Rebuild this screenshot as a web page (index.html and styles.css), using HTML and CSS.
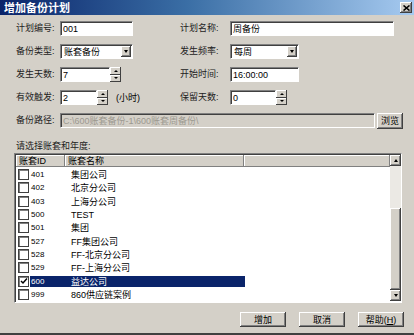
FILE: index.html
```html
<!DOCTYPE html>
<html lang="zh-CN">
<head>
  <meta charset="UTF-8" />
  <title>增加备份计划</title>
  <link rel="stylesheet" href="styles.css">
</head>
<body>
  <div class="dialog">
    <div class="titlebar">
      <span class="title">增加备份计划</span>
      <span class="close">
        <svg width="7" height="6" viewBox="0 0 7 6"><path d="M0.5 0.5 L6.5 5.5 M6.5 0.5 L0.5 5.5" stroke="#000" stroke-width="1.6" fill="none"/></svg>
      </span>
    </div>

    <div class="body">
      <div class="fields">
        <!-- row 1 -->
        <label>计划编号:</label>
        <div><input class="input w73" type="text" value="001"></div>
        <label>计划名称:</label>
        <div><input class="input w164" type="text" value="周备份"></div>

        <!-- row 2 -->
        <label>备份类型:</label>
        <div class="select w73"><span>账套备份</span><span class="drop"><i class="tri-down"></i></span></div>
        <label>发生频率:</label>
        <div class="select w69"><span>每周</span><span class="drop"><i class="tri-down"></i></span></div>

        <!-- row 3 -->
        <label>发生天数:</label>
        <div class="spin">
          <input class="input w50" type="text" value="7">
          <span class="spin-btns"><span class="spin-btn"><i class="tri-up"></i></span><span class="spin-btn"><i class="tri-down"></i></span></span>
        </div>
        <label>开始时间:</label>
        <div><input class="input w69" type="text" value="16:00:00"></div>

        <!-- row 4 -->
        <label>有效触发:</label>
        <div class="spin">
          <input class="input w37" type="text" value="2">
          <span class="spin-btns"><span class="spin-btn"><i class="tri-up"></i></span><span class="spin-btn"><i class="tri-down"></i></span></span>
          <span class="unit">(小时)</span>
        </div>
        <label>保留天数:</label>
        <div class="spin">
          <input class="input w46" type="text" value="0">
          <span class="spin-btns"><span class="spin-btn"><i class="tri-up"></i></span><span class="spin-btn"><i class="tri-down"></i></span></span>
        </div>

        <!-- row 5 -->
        <label>备份路径:</label>
        <div class="path-row">
          <input class="input disabled" type="text" value="C:\600账套备份-1\600账套周备份\" disabled>
          <button class="btn browse">浏览</button>
        </div>
      </div>

      <div class="caption">请选择账套和年度:</div>

      <div class="list">
        <div class="table">
          <div class="thead">
            <span class="th th-id">账套ID</span>
            <span class="th th-name">账套名称</span>
            <span class="th th-rest"></span>
          </div>
          <div class="rows">
            <div class="row"><span class="check"></span><span class="cells"><span class="cid">401</span><span>集团公司</span></span></div>
            <div class="row"><span class="check"></span><span class="cells"><span class="cid">402</span><span>北京分公司</span></span></div>
            <div class="row"><span class="check"></span><span class="cells"><span class="cid">403</span><span>上海分公司</span></span></div>
            <div class="row"><span class="check"></span><span class="cells"><span class="cid">500</span><span>TEST</span></span></div>
            <div class="row"><span class="check"></span><span class="cells"><span class="cid">501</span><span>集团</span></span></div>
            <div class="row"><span class="check"></span><span class="cells"><span class="cid">527</span><span>FF集团公司</span></span></div>
            <div class="row"><span class="check"></span><span class="cells"><span class="cid">528</span><span>FF-北京分公司</span></span></div>
            <div class="row"><span class="check"></span><span class="cells"><span class="cid">529</span><span>FF-上海分公司</span></span></div>
            <div class="row">
              <span class="check">
                <svg width="8" height="8" viewBox="0 0 8 8"><path d="M1 4 L3 6 L7 1.5" stroke="#000" stroke-width="1.5" fill="none"/></svg>
              </span>
              <span class="cells selected"><span class="cid">600</span><span>益达公司</span></span>
            </div>
            <div class="row"><span class="check"></span><span class="cells"><span class="cid">999</span><span>860供应链案例</span></span></div>
          </div>
        </div>
        <div class="scrollbar">
          <span class="sb-btn"><i class="tri-up"></i></span>
          <span class="sb-track"></span>
          <span class="sb-thumb"></span>
          <span class="sb-btn"><i class="tri-down"></i></span>
        </div>
      </div>

      <div class="actions">
        <button class="btn">增加</button>
        <button class="btn">取消</button>
        <button class="btn">帮助(<u>H</u>)</button>
      </div>
    </div>
  </div>
</body>
</html>
```

FILE: styles.css
```css
* {
  box-sizing: border-box;
}

body {
  margin: 0;
  font-family: "Liberation Sans", "Noto Sans CJK SC", sans-serif;
  font-size: 9px;
  color: #000;
  background-color: #d4d0c8;
}

.dialog {
  width: 414px;
  height: 335px;
  background-color: #d4d0c8;
  border-bottom: 2px solid #404040;
  display: flex;
  flex-direction: column;
}

/* title bar */
.titlebar {
  height: 15px;
  flex-shrink: 0;
  display: flex;
  align-items: center;
  justify-content: space-between;
  padding: 0 2px 0 4px;
  background: linear-gradient(to right, #0a246a, #3a6ea5 45%, #a6caf0);
}

.title {
  color: #fff;
  font-family: "Noto Sans CJK SC", sans-serif;
  font-weight: bold;
  font-size: 11px;
  line-height: 15px;
}

.close {
  width: 12px;
  height: 11px;
  display: flex;
  align-items: center;
  justify-content: center;
  background-color: #d4d0c8;
  box-shadow: inset -1px -1px #404040, inset 1px 1px #fff, inset -2px -2px #808080;
}

/* form fields */
.fields {
  display: grid;
  grid-template-columns: 44px 120px 50px 173px;
  grid-auto-rows: 15px;
  row-gap: 8px;
  align-items: center;
  padding: 6px 0 0 16px;
}

.fields label {
  line-height: 15px;
  white-space: nowrap;
  color: #222;
}

.input {
  height: 15px;
  margin: 0;
  padding: 0 2px;
  font: inherit;
  color: #000;
  background-color: #fff;
  border: 1px solid;
  border-color: #808080 #fff #fff #808080;
  box-shadow: inset 1px 1px #404040;
  outline: none;
}

.w37 { width: 37px; }
.w46 { width: 46px; }
.w50 { width: 50px; }
.w69 { width: 69px; }
.w73 { width: 73px; }
.w164 { width: 164px; }

.select {
  height: 15px;
  display: flex;
  align-items: center;
  justify-content: space-between;
  padding: 0 1px 0 3px;
  background-color: #fff;
  border: 1px solid;
  border-color: #808080 #fff #fff #808080;
  box-shadow: inset 1px 1px #404040;
}

.drop {
  width: 10px;
  height: 11px;
  display: flex;
  align-items: center;
  justify-content: center;
  background-color: #d4d0c8;
  box-shadow: inset -1px -1px #404040, inset 1px 1px #fff, inset -2px -2px #808080;
}

.tri-down,
.tri-up {
  display: block;
  width: 0;
  height: 0;
  border-left: 2.5px solid transparent;
  border-right: 2.5px solid transparent;
}

.tri-down {
  border-top: 3px solid #000;
}

.tri-up {
  border-bottom: 3px solid #000;
}

.spin {
  display: flex;
  align-items: center;
}

.spin-btns {
  width: 11px;
  height: 15px;
  display: flex;
  flex-direction: column;
}

.spin-btn {
  flex: 1;
  display: flex;
  align-items: center;
  justify-content: center;
  background-color: #d4d0c8;
  box-shadow: inset -1px -1px #404040, inset 1px 1px #fff;
}

.spin-btn .tri-up,
.spin-btn .tri-down {
  border-left-width: 2px;
  border-right-width: 2px;
  border-top-width: 2px;
  border-bottom-width: 2px;
}

.unit {
  margin-left: 8px;
}

.path-row {
  grid-column: 2 / 5;
  display: flex;
  align-items: center;
  gap: 2px;
}

.input.disabled {
  flex: 1;
  color: #9c9990;
  background-color: #d4d0c8;
}

.btn {
  height: 15px;
  width: 46px;
  padding: 0;
  font: inherit;
  color: #000;
  background-color: #d4d0c8;
  border: none;
  box-shadow: inset -1px -1px #404040, inset 1px 1px #fff, inset -2px -2px #808080;
}

.btn.browse {
  width: 26px;
  height: 16px;
}

/* account list */
.caption {
  margin: 13px 0 2px 16px;
  height: 10px;
  line-height: 10px;
  color: #222;
}

.list {
  margin-left: 14px;
  width: 388px;
  height: 150px;
  display: flex;
  background-color: #fff;
  border: 1px solid;
  border-color: #808080 #fff #fff #808080;
  box-shadow: inset 1px 1px #404040;
}

.table {
  flex: 1;
  display: flex;
  flex-direction: column;
  padding-top: 1px;
}

.thead {
  height: 12px;
  display: flex;
  padding-left: 1px;
}

.th {
  line-height: 12px;
  padding-left: 3px;
  background-color: #d4d0c8;
  box-shadow: inset -1px -1px #808080, inset 1px 1px #fff;
}

.th-id { width: 49px; }
.th-name { width: 179px; }
.th-rest { flex: 1; }

.rows {
  padding-top: 1px;
}

.row {
  height: 13.33px;
  display: flex;
  align-items: center;
  padding-left: 3px;
}

.check {
  width: 11px;
  height: 11px;
  display: flex;
  align-items: center;
  justify-content: center;
  background-color: #fff;
  border: 1px solid #404040;
  box-shadow: inset 1px 1px #808080;
}

.cells {
  width: 215px;
  height: 11px;
  margin-left: 1px;
  display: flex;
  align-items: center;
}

.cid {
  width: 41px;
  padding-left: 1px;
  font-size: 8px;
}

.cells.selected {
  color: #fff;
  background-color: #0a246a;
}

.scrollbar {
  width: 11px;
  display: flex;
  flex-direction: column;
  padding: 1px 0 1px 0;
}

.sb-btn {
  height: 11px;
  display: flex;
  align-items: center;
  justify-content: center;
  background-color: #d4d0c8;
  box-shadow: inset -1px -1px #404040, inset 1px 1px #fff, inset -2px -2px #808080;
}

.sb-track {
  height: 42px;
  background-color: #ebe9e4;
}

.sb-thumb {
  flex: 1;
  background-color: #d4d0c8;
  box-shadow: inset -1px -1px #404040, inset 1px 1px #fff, inset -2px -2px #808080;
}

/* bottom buttons */
.actions {
  display: flex;
  justify-content: flex-end;
  gap: 13px;
  padding: 9px 10px 0 0;
}
```
